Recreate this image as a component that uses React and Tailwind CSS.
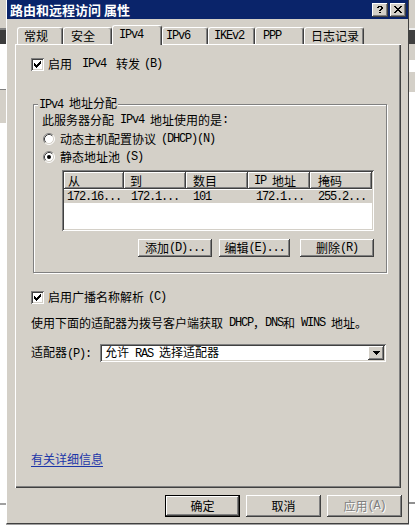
import React from "react";

// ascii runs get a narrow mono face so they sit at half the width of the CJK glyphs
function T({ s }) {
  return s.split(/([\x20-\x7e]+)/).map((p, i) =>
    p === "" ? null : /^[\x20-\x7e]+$/.test(p) ? (
      <span
        key={i}
        className="font-['Liberation_Mono',monospace] tracking-[-1.2px] whitespace-pre"
      >
        {p}
      </span>
    ) : (
      <span key={i}>{p}</span>
    )
  );
}

const CHECK = ["......x", ".....xx", "x...xxx", "xx.xxx.", "xxxxx..", ".xxx...", "..x...."];
const CLOSE = ["xx....xx", ".xx..xx.", "..xxxx..", "...xx...", "..xxxx..", ".xx..xx.", "xx....xx"];
const HELP = [".xxxx.", "xx..xx", "....xx", "...xx.", "..xx..", "......", "..xx.."];

function Pixels({ rows, color = "#000" }) {
  return (
    <svg width={rows[0].length} height={rows.length} shapeRendering="crispEdges">
      {rows.flatMap((r, y) =>
        [...r].map((c, x) =>
          c === "x" ? (
            <rect key={`${x}-${y}`} x={x} y={y} width="1" height="1" fill={color} />
          ) : null
        )
      )}
    </svg>
  );
}

function Checkbox() {
  return (
    <div className="w-[13px] h-[13px] shrink-0 bg-white flex items-center justify-center shadow-[inset_1px_1px_#808080,inset_-1px_-1px_#ffffff,inset_2px_2px_#404040,inset_-2px_-2px_#d4d0c8]">
      <Pixels rows={CHECK} />
    </div>
  );
}

function Radio({ checked }) {
  return (
    <svg width="12" height="12" className="shrink-0">
      <circle cx="6" cy="6" r="5" fill="#fff" />
      <path d="M2.11 9.89A5.5 5.5 0 0 1 9.89 2.11" stroke="#808080" fill="none" />
      <path d="M9.89 2.11A5.5 5.5 0 0 1 2.11 9.89" stroke="#ffffff" fill="none" />
      <path d="M2.82 9.18A4.5 4.5 0 0 1 9.18 2.82" stroke="#404040" fill="none" />
      <path d="M9.18 2.82A4.5 4.5 0 0 1 2.82 9.18" stroke="#d4d0c8" fill="none" />
      {checked && <circle cx="6" cy="6" r="2" fill="#000" />}
    </svg>
  );
}

function Btn({ label, w, isDefault, disabled }) {
  if (isDefault) {
    return (
      <div className={`${w} h-[22px] border border-black flex items-center justify-center shadow-[inset_-1px_-1px_#404040,inset_1px_1px_#ffffff,inset_-2px_-2px_#808080]`}>
        <T s={label} />
      </div>
    );
  }
  return (
    <div
      className={`${w} flex items-center justify-center shadow-[inset_-1px_-1px_#404040,inset_1px_1px_#ffffff,inset_-2px_-2px_#808080] ${
        disabled ? "text-[#808080] [text-shadow:1px_1px_#ffffff]" : ""
      }`}
    >
      <T s={label} />
    </div>
  );
}

const tabs = [
  { label: "常规", w: "w-[46px]", pl: "pl-[6px]" },
  { label: "安全", w: "w-[49px]", pl: "pl-[7px]" },
  { label: "IPv4", w: "w-[50px]", pl: "pl-[6px]", selected: true },
  { label: "IPv6", w: "w-[46px]", pl: "pl-[3px]" },
  { label: "IKEv2", w: "w-[47px]", pl: "pl-[5px]" },
  { label: "PPP", w: "w-[49px]", pl: "pl-[7px]" },
  { label: "日志记录", w: "w-[60px]", pl: "pl-[6px]" },
];

const cols = [
  { head: "从", cell: "172.16...", w: "w-[60px]", hp: "pl-[4px]", cp: "pl-[3px]" },
  { head: "到", cell: "172.1...", w: "w-[62px]", hp: "pl-[6px]", cp: "pl-[7px]" },
  { head: "数目", cell: "101", w: "w-[62px]", hp: "pl-[7px]", cp: "pl-[7px]" },
  { head: "IP 地址", cell: "172.1...", w: "w-[62px]", hp: "pl-[6px]", cp: "pl-[8px]" },
  { head: "掩码", cell: "255.2...", w: "w-[62px]", hp: "pl-[8px]", cp: "pl-[8px]" },
];

export default function App() {
  return (
    <div className="w-[415px] h-[528px] overflow-hidden flex bg-white text-black text-[12px] leading-[14px] font-['Noto_Sans_CJK_SC',sans-serif]">
      {/* LEFT STRIP (window behind) */}
      <div className="w-[6px] flex flex-col shrink-0">
        <div className="h-[28px] bg-[#d4d0c8]" />
        <div className="h-[2px] bg-[#808080]" />
        <div className="h-[14px] bg-[#3c3c3c]" />
        <div className="h-[45px] bg-white" />
        <div className="h-[1px] bg-[#808080]" />
        <div className="h-[33px] bg-[#d4d0c8]" />
        <div className="h-[380px] bg-white" />
        <div className="h-[2px] bg-[#a0a0a0]" />
        <div className="grow bg-white" />
      </div>

      {/* WINDOW */}
      <div className="w-[403px] shrink-0 flex flex-col">
        <div className="h-[524px] bg-[#d4d0c8] border-l border-l-white border-r border-r-[#404040] border-b border-b-[#404040] flex flex-col">
          {/* title bar */}
          <div className="h-[19px] bg-[#0a246a] flex items-center pl-[3px] pr-[2px]">
            <span className="text-white font-bold text-[13px] grow">路由和远程访问 属性</span>
            <div className="w-[16px] h-[14px] flex items-center justify-center shadow-[inset_-1px_-1px_#404040,inset_1px_1px_#ffffff,inset_-2px_-2px_#808080] bg-[#d4d0c8]">
              <Pixels rows={HELP} />
            </div>
            <div className="w-[16px] h-[14px] ml-[2px] flex items-center justify-center shadow-[inset_-1px_-1px_#404040,inset_1px_1px_#ffffff,inset_-2px_-2px_#808080] bg-[#d4d0c8]">
              <Pixels rows={CLOSE} />
            </div>
          </div>

          {/* tabs */}
          <div className="mt-[6px] h-[19px] flex items-end pl-[10px]">
            {tabs.map((t) => (
              <div
                key={t.label}
                className={`${t.w} ${t.pl} flex items-center border-t border-l border-r border-t-white border-l-white border-r-[#404040] rounded-t-[3px] shadow-[inset_-1px_0_#808080] ${
                  t.selected
                    ? "h-[20px] -mb-[1px] relative z-10 bg-[#d4d0c8] pb-[2px]"
                    : "h-[17px]"
                }`}
              >
                <T s={t.label} />
              </div>
            ))}
          </div>

          {/* tab panel */}
          <div className="ml-[8px] w-[386px] h-[444px] flex flex-col pl-[16px] pt-[12px] shadow-[inset_1px_1px_#ffffff,inset_-1px_-1px_#404040,inset_-2px_-2px_#808080]">
            <div className="h-[16px] flex items-center gap-[4px]">
              <Checkbox />
              <T s="启用 IPv4 转发(B)" />
            </div>

            {/* group box */}
            <div className="relative mt-[32px] ml-[2px] w-[354px] h-[169px] border border-[#808080] shadow-[inset_1px_1px_#ffffff,1px_1px_#ffffff] flex flex-col pl-[8px] pt-[8px]">
              <span className="absolute -top-[9px] left-[4px] px-[1px] bg-[#d4d0c8]">
                <T s="IPv4 地址分配" />
              </span>
              <div className="h-[14px] flex items-center">
                <T s="此服务器分配 IPv4 地址使用的是:" />
              </div>
              <div className="mt-[5px] h-[14px] flex items-center gap-[5px] pl-[1px]">
                <Radio />
                <T s="动态主机配置协议(DHCP)(N)" />
              </div>
              <div className="mt-[4px] h-[14px] flex items-center gap-[5px] pl-[1px]">
                <Radio checked />
                <T s="静态地址池(S)" />
              </div>

              {/* list view */}
              <div className="mt-[6px] ml-[20px] w-[312px] h-[61px] bg-white p-[2px] shadow-[inset_1px_1px_#808080,inset_-1px_-1px_#ffffff,inset_2px_2px_#404040,inset_-2px_-2px_#d4d0c8]">
                <div className="flex h-[17px]">
                  {cols.map((c) => (
                    <div
                      key={c.head}
                      className={`${c.w} ${c.hp} bg-[#d4d0c8] flex items-center shadow-[inset_-1px_-1px_#404040,inset_1px_1px_#ffffff,inset_-2px_-2px_#808080]`}
                    >
                      <T s={c.head} />
                    </div>
                  ))}
                </div>
                <div className="mt-[1px] flex h-[13px] bg-[#d4d0c8] w-[308px]">
                  {cols.map((c) => (
                    <div key={c.head} className={`${c.w} ${c.cp} flex items-center`}>
                      <T s={c.cell} />
                    </div>
                  ))}
                </div>
              </div>

              <div className="mt-[8px] ml-[20px] w-[312px] h-[18px] flex justify-end">
                <Btn label="添加(D)..." w="w-[74px]" />
                <div className="w-[7px]" />
                <Btn label="编辑(E)..." w="w-[71px]" />
                <div className="w-[10px]" />
                <Btn label="删除(R)" w="w-[74px]" />
              </div>
            </div>

            <div className="mt-[16px] h-[16px] flex items-center gap-[4px]">
              <Checkbox />
              <T s="启用广播名称解析(C)" />
            </div>
            <div className="mt-[11px] h-[14px] flex items-center">
              <T s="使用下面的适配器为拨号客户端获取 DHCP，DNS和 WINS 地址。" />
            </div>
            <div className="mt-[14px] h-[18px] flex items-center">
              <div className="w-[69px]">
                <T s="适配器(P):" />
              </div>
              <div className="w-[286px] h-[18px] bg-white flex items-center pl-[5px] pr-[2px] shadow-[inset_1px_1px_#808080,inset_-1px_-1px_#ffffff,inset_2px_2px_#404040,inset_-2px_-2px_#d4d0c8]">
                <span className="grow">
                  <T s="允许 RAS 选择适配器" />
                </span>
                <div className="w-[16px] h-[14px] bg-[#d4d0c8] flex items-center justify-center shadow-[inset_-1px_-1px_#404040,inset_1px_1px_#ffffff,inset_-2px_-2px_#808080]">
                  <svg width="7" height="4" shapeRendering="crispEdges">
                    <path d="M0 0h7l-3.5 4z" fill="#000" />
                  </svg>
                </div>
              </div>
            </div>

            <div className="mt-[90px] h-[14px] flex items-center">
              <span className="text-[#1c36a8] underline underline-offset-[2px]">有关详细信息</span>
            </div>
          </div>

          {/* dialog buttons */}
          <div className="mt-[7px] h-[22px] flex justify-end gap-[6px] pr-[6px]">
            <Btn label="确定" w="w-[75px]" isDefault />
            <Btn label="取消" w="w-[75px]" />
            <Btn label="应用(A)" w="w-[75px]" disabled />
          </div>
        </div>
        <div className="h-[1px] bg-[#a0a0a0]" />
        <div className="grow bg-white" />
      </div>

      {/* RIGHT STRIP */}
      <div className="w-[6px] flex flex-col shrink-0">
        <div className="h-[28px] bg-[#d4d0c8]" />
        <div className="h-[2px] bg-[#f0f0f0]" />
        <div className="h-[14px] bg-[#404040]" />
        <div className="h-[16px] bg-[#d4d0c8]" />
        <div className="h-[12px] bg-white" />
        <div className="h-[20px] bg-[#d4d0c8]" />
        <div className="h-[410px] bg-white" />
        <div className="h-[2px] bg-[#909090]" />
        <div className="grow bg-white" />
      </div>
    </div>
  );
}
